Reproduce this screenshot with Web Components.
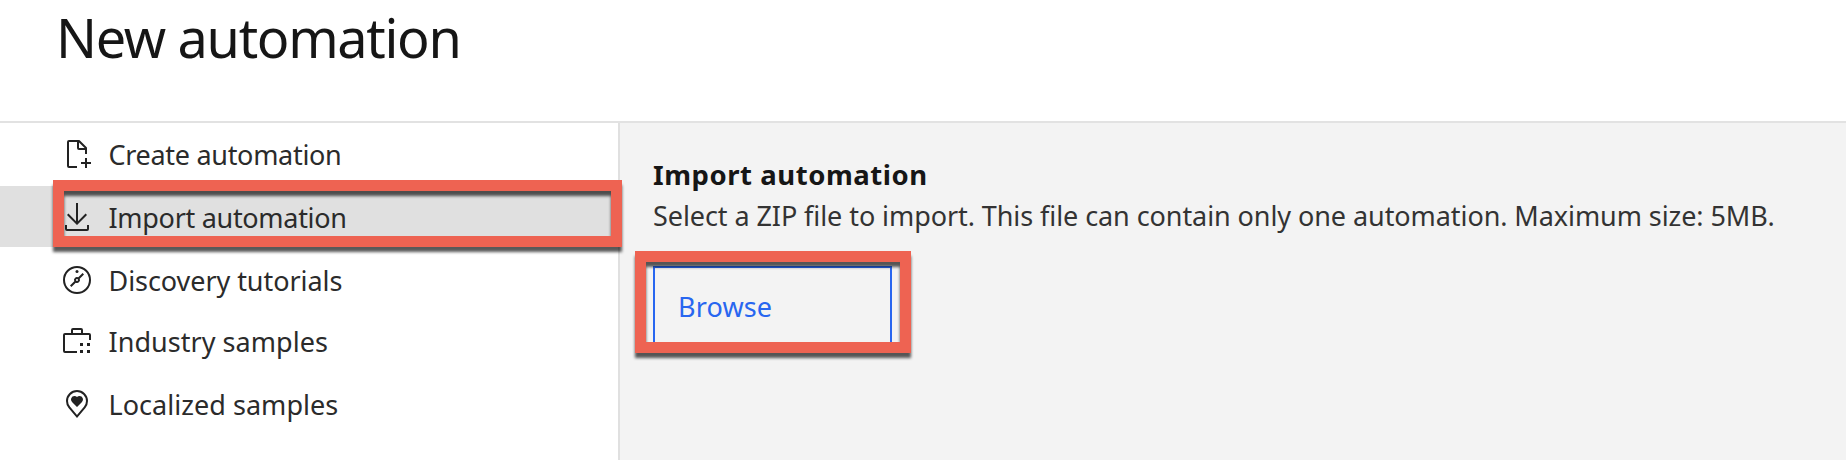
<!DOCTYPE html>
<html lang="en">
<head>
<meta charset="utf-8">
<title>New automation</title>
<style>
html,body{margin:0;height:100%;overflow:hidden;background:#fff}
body{font-family:"Noto Sans","Open Sans",sans-serif;color:#161616}
</style>
</head>
<body>
<automation-page></automation-page>
<script>
const define = (name, html) => {
  const t = document.createElement('template');
  t.innerHTML = html;
  customElements.define(name, class extends HTMLElement {
    constructor() {
      super();
      this.attachShadow({ mode: 'open' }).appendChild(t.content.cloneNode(true));
    }
  });
};

// Red callout frame laid over the element that holds it
define('callout-frame', `
<style>
:host{position:absolute;box-sizing:border-box;border:11px solid #ee6352;filter:drop-shadow(0 5.5px 1.8px rgba(0,0,0,.65));pointer-events:none;z-index:2}
</style>`);

define('nav-item', `
<style>
:host{position:relative;display:flex;align-items:center;height:61px;padding-left:61px;gap:15.5px;box-sizing:border-box;color:#2b2b2b;font-size:27px;line-height:38px;white-space:nowrap}
:host([selected]){background:#e0e0e0}
span{padding-top:2px}
::slotted(svg){width:32px;height:32px;flex:none;fill:#222}
</style>
<slot name="icon"></slot><span><slot></slot></span><slot name="callout"></slot>`);

define('browse-button', `
<style>
:host{position:relative;display:flex;align-items:center;box-sizing:border-box;width:239px;height:80px;border:2px solid #2866f0;border-bottom:0;padding:0 0 0 23px;color:#2866f0;font-size:27px;letter-spacing:.15px}
span{line-height:38px}
</style>
<span><slot></slot></span><slot name="callout"></slot>`);

define('page-header', `
<style>
:host{display:block;height:121px;border-bottom:2px solid #e2e2e2;padding-left:56px}
h1{margin:0;font-weight:400;font-size:54px;line-height:74px;letter-spacing:-1.32px;white-space:nowrap}
</style>
<h1><slot></slot></h1>`);

define('import-panel', `
<style>
:host{display:block;flex:1;min-width:0;background:#f3f3f3;padding:31px 0 0 33px}
h2{margin:0;font-size:27.5px;line-height:42px;font-weight:700;letter-spacing:.55px;white-space:nowrap}
p{margin:1px 0 0;font-size:27px;line-height:38px;color:#333;letter-spacing:-.075px;white-space:nowrap}
browse-button{margin-top:31px}
callout-frame{left:-20px;top:-17px;width:276px;height:102px}
h2 span,p span{display:inline-block}
</style>
<h2><span>Import automation</span></h2>
<p><span>Select a ZIP file to import. This file can contain only one automation. Maximum size: 5MB.</span></p>
<browse-button>Browse<callout-frame slot="callout"></callout-frame></browse-button>`);

define('side-nav', `
<style>
:host{display:flex;flex-direction:column;width:618px;border-right:2px solid #e0e0e0;flex:none;background:#fff}
nav-item+nav-item{margin-top:2px}
nav-item:nth-of-type(4){margin-top:0}
nav-item:nth-of-type(1),nav-item:nth-of-type(2){letter-spacing:-.3px}
nav-item:nth-of-type(3){letter-spacing:-.06px}
nav-item:nth-of-type(4),nav-item:nth-of-type(5){letter-spacing:.04px}
callout-frame{left:53px;top:-6px;width:569px;height:67px}
</style>
<nav-item><svg slot="icon" viewBox="0 0 32 32"><path d="M30 24h-4v-4h-2v4h-4v2h4v4h2v-4h4z"/><path d="M16 28H8V4h8v6a2 2 0 0 0 2 2h6v4h2v-6a1 1 0 0 0-.3-.7l-7-7A1 1 0 0 0 18 2H8a2 2 0 0 0-2 2v24a2 2 0 0 0 2 2h8zM18 4.400 23.600 10H18z"/></svg>Create automation</nav-item>
<nav-item selected><svg slot="icon" viewBox="0 0 32 32"><path d="M26 24v4H6v-4H4v4a2 2 0 0 0 2 2h20a2 2 0 0 0 2-2v-4zM26 14l-1.410-1.410L17 20.170V2h-2v18.170l-7.590-7.580L6 14l10 10z"/></svg>Import automation<callout-frame slot="callout"></callout-frame></nav-item>
<nav-item><svg slot="icon" viewBox="0 0 32 32"><path d="M16 4A12 12 0 1 1 4 16 12 12 0 0 1 16 4m0-2a14 14 0 1 0 14 14A14 14 0 0 0 16 2z"/><path d="M23 10.410 21.590 9l-4.300 4.300a3 3 0 0 0-4 4L9 21.590 10.410 23l4.300-4.300a3 3 0 0 0 4-4zM17 16a1 1 0 1 1-1-1 1 1 0 0 1 1 1z"/><circle cx="16" cy="7.500" r="1.500"/></svg>Discovery tutorials</nav-item>
<nav-item><svg slot="icon" viewBox="0 0 32 32"><path d="M16 26H4V10h24v5h2v-5a2 2 0 0 0-2-2h-6V5a2 2 0 0 0-2-2h-8a2 2 0 0 0-2 2v3H4a2 2 0 0 0-2 2v16a2 2 0 0 0 2 2h12zM12 5h8v3h-8z"/><path d="M19 18h3v3h-3zM26 18h3v3h-3zM19 25h3v3h-3zM26 25h3v3h-3z"/></svg>Industry samples</nav-item>
<nav-item><svg slot="icon" viewBox="0 0 32 32"><path d="M16 30 7.564 20.051A10.900 10.900 0 0 1 5 13a11 11 0 0 1 22 0 10.900 10.900 0 0 1-2.560 7.050zM16 4a9 9 0 0 0-9 9 8.900 8.900 0 0 0 2.130 5.800L16 26.900l6.900-8.140A8.900 8.900 0 0 0 25 13a9 9 0 0 0-9-9z"/><path d="M18.500 8A3.500 3.500 0 0 0 16 9.100 3.500 3.500 0 0 0 13.500 8a3.500 3.500 0 0 0-2.500 6l5 5 5-5a3.500 3.500 0 0 0-2.500-6z"/></svg>Localized samples</nav-item>`);

define('automation-page', `
<style>
:host{display:flex;flex-direction:column;height:460px;overflow:hidden}
main{display:flex;flex:1;min-height:0}
side-nav{position:relative;z-index:1}
</style>
<page-header>New automation</page-header>
<main><side-nav></side-nav><import-panel></import-panel></main>`);
</script>
</body>
</html>
